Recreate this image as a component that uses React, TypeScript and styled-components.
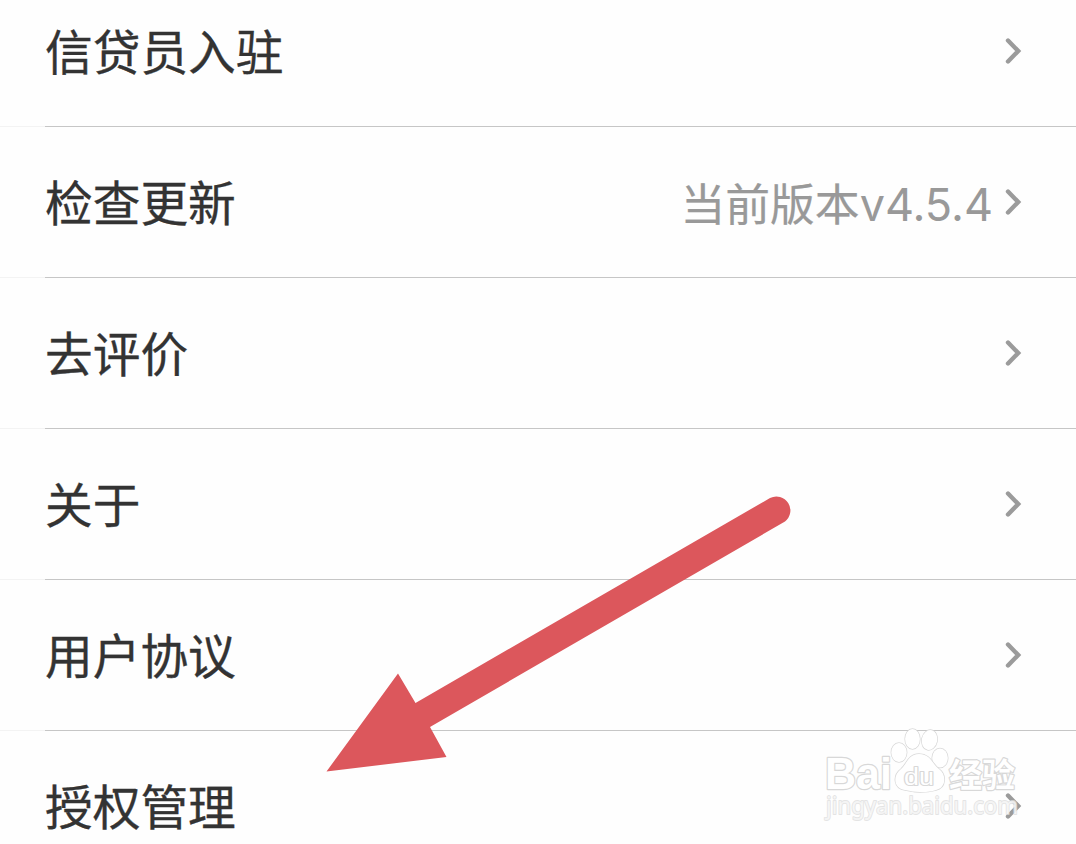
import React from "react";
import styled, { createGlobalStyle } from "styled-components";

const GlobalStyle = createGlobalStyle`
  body { margin: 0; background: #fefefe; overflow: hidden; }
  * { box-sizing: border-box; }
`;

const Screen = styled.main`
  position: relative;
  width: 1076px;
  height: 844px;
  overflow: hidden;
  background: #fefefe;
  font-family: "Noto Sans CJK SC", sans-serif;
`;

const List = styled.ul`
  list-style: none;
  margin: -24px 0 0;
  padding: 0;
`;

const Row = styled.li`
  height: 151px;
  display: flex;
  align-items: center;
  justify-content: space-between;
  padding: 0 53px 1px 45px;
  background: linear-gradient(to right, #f3f3f3 45px, #c6c6c6 45px) bottom / 100% 1px no-repeat;
`;

const Label = styled.span`
  font-size: 47.7px;
  line-height: 70px;
  padding-bottom: 2px;
  color: #333;
  -webkit-text-stroke: 0.35px #333;
  white-space: nowrap;
`;

const Trailing = styled.div`
  display: flex;
  align-items: center;
  gap: 10px;
`;

const Value = styled.span`
  display: flex;
  align-items: baseline;
  font-size: 44.8px;
  line-height: 66px;
  padding-top: 2px;
  color: #999;
  -webkit-text-stroke: 0.2px #999;
  white-space: nowrap;
`;

const Version = styled.span`
  font-family: Inter, sans-serif;
  font-size: 45px;
  -webkit-text-stroke: 0;
`;

const ChevronIcon = styled.svg`
  display: block;
  width: 20px;
  height: 30px;
`;

const Overlay = styled.svg`
  position: absolute;
  inset: 0;
  pointer-events: none;
`;

const Chevron = () => (
  <ChevronIcon viewBox="0 0 20 30">
    <path d="M5 4.5 L15.2 15 L5 25.5" fill="none" stroke="#9b9b9b" strokeWidth="4.4" strokeLinecap="round" strokeLinejoin="miter" />
  </ChevronIcon>
);

const items: { label: string; version?: string }[] = [
  { label: "信贷员入驻" },
  { label: "检查更新", version: "v4.5.4" },
  { label: "去评价" },
  { label: "关于" },
  { label: "用户协议" },
  { label: "授权管理" },
];

const Watermark = () => (
  <g fill="#fff" stroke="#d8d8d8" strokeWidth="2.4" paintOrder="stroke" strokeLinejoin="round">
    <text x="825" y="789" fontFamily="Liberation Sans" fontWeight="700" fontSize="43.5" textLength="67" lengthAdjust="spacingAndGlyphs">Bai</text>
    <g strokeWidth="1.4">
      <ellipse cx="899" cy="752.5" rx="7.7" ry="9.6" />
      <ellipse cx="912.5" cy="739" rx="7.4" ry="10" />
      <ellipse cx="929.5" cy="740" rx="7.7" ry="10" transform="rotate(12 929.5 740)" />
      <ellipse cx="940" cy="758" rx="7.8" ry="9.5" />
      <path d="M919 754 C908 754 907 764 901 769 C892 776 894 789 905 790 C911 791 914 792 920 792 C926 792 929 792 936 790 C946 788 947 775 939 769 C932 764 931 754 919 754Z" />
    </g>
    <text x="904" y="785" fontFamily="Liberation Sans" fontSize="23" strokeWidth="2.2" textLength="30" lengthAdjust="spacingAndGlyphs">du</text>
    <text x="949" y="787" fontFamily="Noto Sans CJK SC" fontWeight="700" fontSize="33.5" textLength="66" lengthAdjust="spacingAndGlyphs">经验</text>
    <text x="826" y="814" fontFamily="Noto Sans" fontSize="23" strokeWidth="1.8" stroke="#dddddd" strokeOpacity="0.8" fillOpacity="0.65" textLength="192" lengthAdjust="spacingAndGlyphs">jingyan.baidu.com</text>
  </g>
);

export default function App() {
  return (
    <Screen>
      <GlobalStyle />
      <List>
        {items.map(({ label, version }) => (
          <Row key={label}>
            <Label>{label}</Label>
            <Trailing>
              {version && (
                <Value>
                  当前版本<Version>{version}</Version>
                </Value>
              )}
              <Chevron />
            </Trailing>
          </Row>
        ))}
      </List>
      <Overlay width="1076" height="844" viewBox="0 0 1076 844">
        <path d="M326.5 771.5 L398 673.5 L415.5 703 L770 498 A14 14 0 0 1 785 521.5 L430 727 L446.5 757 Z" fill="#dc575c" />
        <Watermark />
      </Overlay>
    </Screen>
  );
}
